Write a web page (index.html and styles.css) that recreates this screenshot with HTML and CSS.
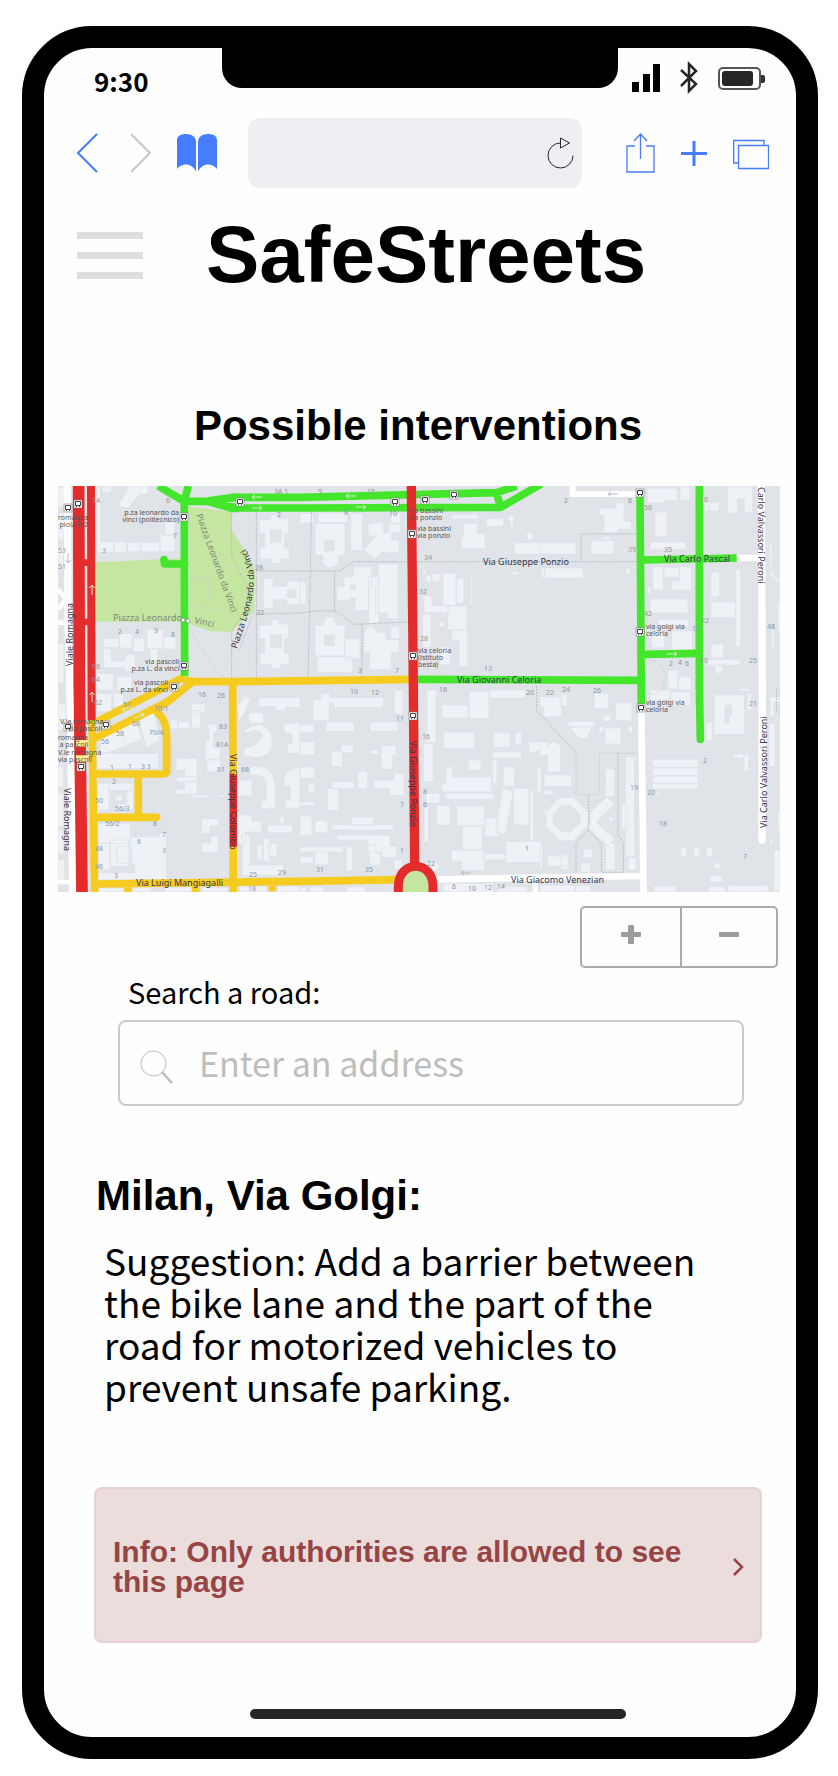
FILE: index.html
```html
<!DOCTYPE html>
<html lang="en">
<head>
<meta charset="utf-8">
<meta name="viewport" content="width=device-width, initial-scale=1">
<title>SafeStreets</title>
<link rel="stylesheet" href="styles.css">
</head>
<body>
<div class="phone">
  <div class="status">
    <span class="time">9:30</span>
    <span class="notch"></span>
    <span class="indicators">
      <svg width="28" height="28" viewBox="0 0 28 28" aria-label="Signal"><path d="M0 18h7v10H0zM11 10h7v18h-7zM21 0h7v28h-7z"/></svg>
      <svg width="18" height="34" viewBox="0 0 18 34" fill="none" stroke="#262626" stroke-width="2.500" aria-label="Bluetooth"><path d="M1 9l15 14-7 7V3l7 7L1 25"/></svg>
      <svg width="47" height="23" viewBox="0 0 47 23" aria-label="Battery"><rect x="1" y="1" width="41" height="21" rx="4" fill="none" stroke="#555" stroke-width="2"/><rect x="4" y="4" width="31" height="15" rx="3" fill="#262626"/><path d="M43 8h2q2 0 2 2v4q0 2-2 2h-2z" fill="#333"/></svg>
    </span>
  </div>

  <nav class="toolbar" aria-label="Browser">
    <button class="icon-btn" aria-label="Back"><svg width="29" height="40" viewBox="0 0 29 40" fill="none" stroke="#467cfe" stroke-width="2"><path d="M20 1L1 20l19 19"/></svg></button>
    <button class="icon-btn" aria-label="Forward"><svg width="20" height="40" viewBox="0 0 20 40" fill="none" stroke="#c7c7cc" stroke-width="2"><path d="M0 1l19 19L0 39"/></svg></button>
    <button class="icon-btn" aria-label="Bookmarks"><svg width="42" height="38" viewBox="0 0 42 38" fill="#467cfe"><path d="M1 35V6C1 2 5 0 10 0c6 0 10 3 10 8v30C17 29 6 28 1 35zM22 38V8c0-5 4-8 10-8 5 0 9 2 9 6v29C36 28 25 29 22 38z"/></svg></button>
    <div class="url">
      <input class="url-input" type="text" aria-label="Page address">
      <button class="icon-btn" aria-label="Reload"><svg width="27" height="32" viewBox="0 0 27 32" fill="none" stroke="#262626"><path d="M13.500 6A12.500 12.500 0 1 0 26 18.500M13.500 1v10l9-5z"/></svg></button>
    </div>
    <div class="actions">
      <button class="icon-btn" aria-label="Share"><svg width="29" height="40" viewBox="0 0 29 40" fill="none" stroke="#467cfe" stroke-width="1.300"><path d="M9 13H1v26h27V13h-8M14.500 26V1M8 8l6.500-7L21 8"/></svg></button>
      <button class="icon-btn" aria-label="New tab"><svg width="26" height="40" viewBox="0 0 26 40" stroke="#467cfe" stroke-width="3"><path d="M13 8v25M0 20.500h26"/></svg></button>
      <button class="icon-btn" aria-label="Tabs"><svg width="36" height="40" viewBox="0 0 36 40" fill="none" stroke="#467cfe" stroke-width="1.300"><path d="M5 30H.7V7.500h30.300V12"/><path d="M5.500 12.500h30v23h-30z"/></svg></button>
    </div>
  </nav>

  <header class="header">
    <button class="menu" aria-label="Menu"><span></span><span></span><span></span></button>
    <h1 class="brand">SafeStreets</h1>
  </header>

  <main>
    <h2 class="page-title">Possible interventions</h2>

    <svg class="map" viewBox="0 0 722 406" role="img" aria-label="Street map">
      <defs>
        <path id="arc-vinci" d="M179 163C187 136 201 104 194 78Q190 62 176 50"/>
        <g id="stop"><rect x="-4" y="-4" width="8" height="8" fill="#fff" stroke="#777" stroke-width=".6"/><path d="M-2.500-2.500h5v4h-5zM-1.500 1.500v1.500M1.500 1.500v1.500" fill="none" stroke="#444"/></g>
        <path id="arrow" d="M-5 0H5M2-2.500L5 0 2 2.500" fill="none"/>
      </defs>
      <rect width="722" height="406" fill="#e0e3e8"/>
      <g transform="scale(.333333)">
        <path class="park" d="M113 229l260-12v190H113zM392 62l129 15v55l40 62 29 55 1 30-3 95-40 35-27 28-62-1-67-22z"/>
        <g class="bld">
          <!-- north-west blocks -->
          <g transform="translate(-24 -18)">
            <path d="M24 20h20v60H24zM24 100h18v80H24zM24 200h17v60H24zM24 490h18v120H24z"/>
            <path d="M140 20h12v165h40v32h-52zM155 20h30v16h-30zM192 185h38v31h-38zM232 187h40v28h-40zM272 187h58v28h-58zM330 165h45v50h-45zM345 125h30v40h-30zM203 78l36-60h55v24h-25l-34 42z"/>
            <path d="M628 120h34v-16h24v12h30v44h-12v44h14v34h-26v12h-28v-12h-34v-34h14v-44h-16zM640 295h30v24h40v-16h40v70h-40v-14h-40v26h-30zM628 436h34v-16h24v12h30v44h-12v44h14v34h-26v12h-28v-12h-34v-34h14v-44h-16z"/>
            <path d="M160 475h48v28h-48zM208 460h38v44h-38zM160 505h24v38h42v-20h30v52h-32v-12h-64zM250 475h34v40h-34zM290 448h50v58h-50zM340 470h38v38h-38zM300 505h24v50h-24zM140 580h50v50h-50zM200 590h45v40h-45z"/>
          </g>
          <!-- university blocks -->
          <g transform="translate(726 -18)">
            <path d="M0 100h40v30H0zM45 130h90v96h-20v24l-16 13H82l-14-13v-24H45zM54 98h88v30H54zM152 100h36v112h-36zM220 128h30v30h16v-26h36v26h-28v22h24v38h-54l-20 20-34-28 40-42h-26v-38h16zM272 100h30v30h-30z"/>
            <path d="M160 260h55v60h-9v72h-42v-32h-54v-40h22v-30h28zM206 290h30v140h-30zM235 252h60v164h-32v-16h-36v-86h8zM0 305h18v68H0z"/>
            <path d="M45 435h24l10-24h22l10 24h24v92h-90zM134 476h46v60h-46zM52 530h106v48H52zM192 455l20-20 22 22h24v22h40v38h-24v52h-66v-52h-16v-30zM272 440h26v36h-26z"/>
            <path d="M455 103h80v14h-80zM558 115h52v24h-52zM624 108h20v12h-4v20h-10v-20h-6zM490 131h42v30h24v45h-72v-35h6zM642 188h110v34H642zM676 168l14-14 14 14-14 14zM722 264h40v30h-40z"/>
            <path d="M368 268h10v14h-10zM378 285h16v22h-16zM396 282h24v22h-24zM428 280h40v96h-40zM470 294h22v76h-22zM372 347h24v29h54v22h-78zM443 378h58v72h-58zM368 402h25v100h-25zM455 450h48v110h-26v-80h-22zM418 425h14v16h-14zM420 500h30v54h-30zM512 285h6v90h-6zM590 282h10v10h-10zM635 275h20v10h-20z"/>
          </g>
          <!-- north-east blocks -->
          <g transform="translate(1446 -18)">
            <path d="M26 64h6v10h-6zM178 84h50v-16h24v55h22v25h-40v10h-42v-52h-14zM152 182h70v40h-70zM0 188h108v34H0zM15 264h115v30H15zM3 264h10v24H3zM252 205h8v14h-8zM266 205h22v14h-22zM258 264h13v18h-13zM185 170h28v8h-28z"/>
            <path d="M322 25h90v36h-36v8h-54zM420 20h30v40h-30zM345 96h36v74h-36zM330 186h108v22H330zM490 66h22v26h-22zM505 66h32v28h-32zM563 20h74v78h-24v-42h-20v44h-30z"/>
            <path d="M338 260h32v70h-32zM372 262h46v30h-46zM418 260h36v70h-60v-28h24zM322 320h10v20h-10zM330 357h114v42H330zM354 418h92v22h-92zM334 455h40v48h-40zM395 452h62v58h-62zM512 276h27v74h-27zM512 365h74v48h-74zM587 266h15v236h-15zM512 492h38v42h-38zM500 538h100v18h-100zM525 556h22v24h-22zM384 570h30v58h-30zM415 590h38v40h-38zM595 625h35v8h-35zM688 190h8v90l25 20v12l-30-25zM694 448h8v62h-8zM713 365h8v90h-8z"/>
          </g>
          <!-- south-west blocks -->
          <g transform="translate(-24 612)">
            <path d="M24 40h24v80H24zM24 230h16v60H24zM24 310h18v100H24zM24 420h18v70H24zM24 510h20v70H24z"/>
            <path d="M140 10h45v55h-45zM190 10h30v40h-30zM150 150l60-35 28 50-88 30zM200 110l55-25 22 62-48 22zM262 80l50-18 18 90-40 20zM140 190h186v46H140zM142 280h36v80h-36zM178 280h72v22h-72zM230 302h20v58h-50v-18h30zM196 316h22v16h-22z"/>
            <path d="M145 400h96v60h-96zM180 450h56v80h-56zM145 460h34v80h-34zM200 470h44v50h-44zM262 400h88v28h-90v14h-20v80h14v26H142v22h208V400zM258 430h70v10h-70z"/>
            <path d="M378 205h64v70h-64v-15h26v-20h-26zM378 260h64v52h-64v-14h26v-20h-26zM420 315h52v8h-52zM503 315h20v8h-20zM362 90h22v26h-22zM384 95h36v20h-36zM424 62h28v52h-28zM424 42h42v28h-42zM474 102h26v26h-10v42h20v40h-44v-60h12zM470 208h42v38h-42zM454 386h52v22h-26v30h24v50h-50v-30h28v-28h-28zM348 318h6v12h-6zM518 544h8v14h-8z"/>
            <path d="M562 50l22-32 18 6-16 42-20 30zM596 68h44v32h-44zM626 22h124v30H706v10h-30v-12h-50zM584 120q60-40 82 20v30q-20 50-84 24v-20q44-4 54-38-10-28-52-4zM702 100h48v90h-38v-30h14v-30h-24zM562 270h44v48h-44zM600 230q70-10 76 56v70h-42v-24h14v-60q-10-20-48-16zM702 260q10-24 48-28v122h-44v-24h14v-42h-18zM560 374h46v20h28v32h-48v38h-30zM652 404h76v24h-76zM576 434h24v90h100v32H576zM620 465h16v44h-16zM640 445h20v70h-20zM655 460h26v40h-26zM688 378h16v22h-16zM570 588h80v18h-80zM682 588h68v18h-68zM145 594h80v12h-80zM248 592h56v14h-56zM345 592h80v14h-80zM456 592h78v14h-78z"/>
          </g>
          <!-- south-centre blocks -->
          <g transform="translate(726 612)">
            <path d="M38 28h24v-18h28v12h160v30H102v-12H88v52H38zM283 0h26v72h-26zM78 96h84v28H78zM210 96h84v28h-84zM0 104h42v24H0zM0 155h44v40H0zM94 184h30v-20h36v24h-32v42H94zM210 180h26v12h-26zM244 166h44v30h-10v42h-34zM173 244h30v52h-30zM96 274h66v22H96zM222 270h60v-20h30v66h-44v-20h-46zM82 294h34v68H82zM0 230h44v34H0zM24 280h20v30H24zM0 335h46v12H0zM155 380h65v26h-65zM0 378h36v58H0zM95 404h185v16H95zM44 400q22-20 40 0v28h-40zM110 435h160v34h20v34h-46v-16h-40v-36h-94zM0 470h130v16H0zM45 490q20-44 40 0v34H45zM138 470h20v72h-20zM0 500h40v20H0zM198 464h30v24h14v38h-34v-36zM282 510h24v26h-24z"/>
            <path d="M380 0h28v158h-28zM370 160h30v114h-30zM425 44h80v40h-80zM507 5h60v80h-60zM566 0h110v24H566zM430 126h94v50h-94zM580 128h50v44h-50zM645 127h20v38h-20zM505 210h38v30h-38zM577 185h88v20h-88zM438 230h20v30h116v45H426v-26h12zM577 210h14v72h-14zM610 230h34v58h-34zM436 310h146v18H436zM378 310h42v30h-42zM372 350h14v105h-14zM410 346h40v60h-40zM470 348h84v60h-84zM487 408h60v72h-60zM554 384h40v56h-40zM608 295l32 8-24 130-30-6zM640 295h46v110h-46zM690 300h10v154h-10zM617 454h108v64H617zM454 480h100v62h-70v-28h-30zM548 490h68v20h-68zM380 520q24-22 40 10l-18 20-22-14zM686 155h54v20l-54 16zM710 235h14v70h-14zM735 350q-14 20 15 50z"/>
            <path d="M30 590h40v16H30zM140 590h56v16h-56zM430 580h150v26H430zM592 590h90v16h-90zM0 592h20v14H0z"/>
          </g>
          <!-- south-east blocks -->
          <g transform="translate(1446 612)">
            <path d="M0 20h65v60H10V50H0zM60 12h22v36H60zM162 10h44v46h-44zM226 38h50v54h-50zM195 114h48v48h-48zM84 94h80v16H84zM90 110h66l-16 36q-30 6-50-36zM176 110h16v16h-16zM190 75h22v18h-22zM265 108h12v18h-12zM24 170q18-30 38 0v76H22v-50H0v-40h24zM12 254h82v36H12zM12 300h26v14H12zM256 200h28v300h-28zM196 236h28v84h-28zM245 342h20v78h-20zM264 504h24v36h-24zM197 460h28v80h-28zM207 380h12v14h-12z"/>
            <path fill-rule="evenodd" d="M60 322h40l50 50v30l-50 50H60l-42-42v-46zM66 346l-26 26v30l28 24h24l28-26v-26l-28-28zM145 372l55-50 25 20-52 50v10l52 44-20 22-60-52z"/>
            <path d="M130 476h28v28h-28zM122 518h30v28h-30zM22 498h64v30H22zM62 492h24v46H62zM0 456h8v80H0zM330 0h60v30h-60zM392 5h60v42h-60zM498 96h20v56h-20zM612 192h14v52h-14zM578 192h34v12h-34zM338 208h136v24H338zM338 233h136v24H338zM338 258h136v22H338zM338 281h136v16H338zM342 307h18v8h-18zM422 472h18v28h-18zM461 472h18v28h-18zM499 472h18v28h-18zM522 518h18v18h-18zM510 556h36v20h-36zM506 590h50v16h-50zM564 586h120v20H564zM340 588h70v18h-70zM687 100h18v130h-18zM690 20h28v16h-16v44h-12zM702 480h18v124h-18zM712 363h8v60h-8zM688 450h10v12h-10zM622 10h12v50h-12zM475 254h8v8h-8zM0 586h106v20H0zM106 586h46v20h-46z"/>
            <path fill-rule="evenodd" d="M522 14h92v120h-92zM555 46v28h20V46zM555 76v24h12V76z"/>
          </g>
        </g>
        <g fill="#e0e3e8"><path d="M798 162h32v34h-32zM798 446h32v34h-32zM876 295h18v18h-18zM876 335h18v14h-18zM636 130h36v40h-36zM636 445h36v40h-36zM686 310h30v26h-30z"/></g>
        <g class="paths">
          <path d="M521 80v52l0 80 62 124-62 100v150M595 80v516M595 255h250l40-28h865M585 384l141-3q70-10 110-4l52 38 160-7M760 80l0 16-10 500M830 260v120M912 415v180M580 394l-36 100M1750 144h-181v78M2156 610v64l130 130"/>
          <path d="M1592 927v106l-38 38v112M1592 1033l38 40v86h66v-90l-16-20V800M1436 600v75l120 125" />
        </g>
        <g class="trails"><path d="M392 300l120-65 60 20M392 270l60 10v60l-26 60M392 355l140 30M460 155l60-40M392 425l90 140 40 20M1554 800v126h70V802h112M342 768v100M1775 520q60 20 45 70t-55 30"/></g>

        <g class="road white">
          <path d="M28 0l2 400 8 300 6 518" stroke-width="22"/><path d="M0 310l24 30-24 30M0 410h50M0 1188h40" stroke-width="14"/>
          <path d="M1544 0v24h190" stroke-width="18"/>
          <path d="M1750 660l7 558M1138 1180l620-10M2036 216h66" stroke-width="20"/>
          <path d="M2110 0l3 600-1 462" stroke-width="22" stroke-linecap="round"/>
          <path d="M1432 1190v28" stroke-width="16"/>
        </g>
        <g class="road yellow">
          <path d="M118 706l182-92 80-42M108 758l220-110 72-58M376 582l36 5h100l566-7" />
          <path d="M297 678q28 24 29 70v110q-2 6-14 6H110M241 864v128M108 994h188" stroke-linecap="round"/>
          <path d="M102 690l4 280 4 248M524 585l2 633M110 1194l616-8 300-5M209 1194v24M413 1190v28M643 1188v28"/>
        </g>
        <g class="road green">
          <path d="M391 0l-12 44v180l1 346M301 0l74 44M375 46h90M521 34h205l590-14 60-20M521 66h205l602-2 122-70M1316 22l12 42"/>
          <path d="M318 221l2 13h60" stroke-linecap="round" stroke-linejoin="round"/>
          <path d="M1074 580l672 3M1746 32l2 300 2 322M1758 222l278-6M1758 505l165-3"/>
          <path d="M1924 0v600l3 160" stroke-linecap="round"/>
        </g>
        <path d="M446 34l75-11h20v56h-20l-75-22z" fill="#44e62c"/><path d="M500 49l45-3v8z" fill="#e0e3e8"/>
        <g class="road red">
          <path d="M62 0l2 600 8 618" stroke-width="35"/><path d="M99 0l2 702" stroke-width="24"/><path d="M76 230h20M76 408h20" stroke-width="20"/>
          <path d="M1060 0l6 600 4 540" stroke-width="28"/><path d="M526 866v216" stroke-width="22"/>
        </g>
        <path d="M1021 1250v-48c0-82 104-82 104 0v48z" fill="#c5e6a0" stroke="#e42c2c" stroke-width="27"/>
        <path d="M54 762h34v20H54zM54 808h34v20H54z" fill="#fbf08d"/>
      </g>

      <g stroke="#d2efcb" stroke-width="1">
        <use href="#arrow" transform="translate(199 11) rotate(180)"/><use href="#arrow" x="199" y="22"/><use href="#arrow" transform="translate(293 10) rotate(180)"/><use href="#arrow" x="303" y="21"/><use href="#arrow" x="614" y="168"/>
        <use href="#arrow" transform="translate(34 104) rotate(-90)"/><use href="#arrow" transform="translate(34 211) rotate(-90)"/><use href="#arrow" transform="translate(69 222) rotate(153)"/><use href="#arrow" transform="translate(81 230) rotate(-27)"/>
      </g>
      <g stroke="#b5b9bd"><use href="#arrow" transform="translate(555 8) rotate(180)"/><use href="#arrow" transform="translate(408 387) rotate(180)"/><use href="#arrow" transform="translate(10 72) rotate(90)"/></g>

      <g><use href="#stop" x="20" y="18"/><use href="#stop" x="10" y="22"/><use href="#stop" x="126" y="31"/><use href="#stop" x="182" y="16"/><use href="#stop" x="126" y="180"/><use href="#stop" x="116" y="201"/><use href="#stop" x="337" y="16"/><use href="#stop" x="367" y="14"/><use href="#stop" x="396" y="9"/><use href="#stop" x="354" y="48"/><use href="#stop" x="355" y="170"/><use href="#stop" x="355" y="230"/><use href="#stop" x="582" y="7"/><use href="#stop" x="582" y="146"/><use href="#stop" x="583" y="222"/><use href="#stop" x="48" y="239"/><use href="#stop" x="10" y="241"/><use href="#stop" x="23" y="281"/></g>
      <g fill="#fff" stroke="#666" stroke-width=".5"><circle cx="125" cy="134" r="2"/><circle cx="130" cy="135" r="2"/></g>

      <g class="num">
        <text x="34" y="17">74</text><text x="108" y="17">6</text><text x="115" y="52">7</text><text x="44" y="67">3</text><text x="60" y="148">2</text><text x="77" y="148">4</text><text x="96" y="147">9</text><text x="113" y="151">8</text><text x="216" y="8">3A 1</text><text x="219" y="31">2</text><text x="197" y="84">28</text><text x="198" y="129">32</text><text x="34" y="183">66</text><text x="34" y="196">64</text><text x="0" y="67">53</text><text x="0" y="83">51</text>
        <text x="260" y="8">9</text><text x="309" y="8">15</text><text x="286" y="29">8</text><text x="331" y="30">10</text><text x="366" y="74">34</text><text x="361" y="108">32</text><text x="362" y="155">28</text><text x="300" y="187">3</text><text x="337" y="187">7</text><text x="426" y="185">13</text>
        <text x="506" y="17">2</text><text x="570" y="17">6</text><text x="586" y="24">56</text><text x="642" y="16">16</text><text x="570" y="66">39</text><text x="606" y="66">35</text><text x="586" y="130">42</text><text x="634" y="145">19</text><text x="643" y="137">22</text><text x="642" y="177">20</text><text x="691" y="177">25</text><text x="709" y="143">48</text><text x="611" y="180">2</text><text x="620" y="179">4</text><text x="627" y="180">6</text>
        <text x="36" y="219">62</text><text x="65" y="221">57</text><text x="74" y="240">60</text><text x="58" y="250">58</text><text x="43" y="258">56</text><text x="91" y="249">70/4</text><text x="96" y="225">70/1</text><text x="140" y="211">16</text><text x="159" y="212">26</text><text x="161" y="243">83</text><text x="158" y="261">81A</text><text x="159" y="286">81</text><text x="183" y="286">68</text><text x="52" y="284">1</text><text x="70" y="283">1</text><text x="83" y="283">3 3</text><text x="54" y="298">2</text><text x="57" y="325">56/3</text><text x="47" y="340">56/2</text><text x="95" y="340">8</text><text x="79" y="358">6</text><text x="104" y="351">7</text><text x="104" y="367">3</text><text x="37" y="317">50</text><text x="37" y="365">48</text><text x="37" y="383">46</text><text x="56" y="392">3</text><text x="191" y="391">25</text><text x="220" y="389">29</text><text x="190" y="405">18</text>
        <text x="292" y="208">10</text><text x="313" y="209">12</text><text x="338" y="235">11</text><text x="364" y="253">16</text><text x="365" y="308">8</text><text x="365" y="321">6</text><text x="342" y="321">7</text><text x="342" y="367">1</text><text x="369" y="380">22</text><text x="258" y="386">31</text><text x="307" y="386">35</text><text x="394" y="403">6</text><text x="410" y="405">10</text><text x="426" y="404">12</text><text x="439" y="403">14</text><text x="467" y="365">1</text><text x="468" y="209">20</text><text x="381" y="206">18</text>
        <text x="488" y="209">22</text><text x="504" y="206">24</text><text x="535" y="207">26</text><text x="572" y="304">19</text><text x="589" y="309">20</text><text x="601" y="340">18</text><text x="645" y="277">2</text><text x="685" y="373">7</text><text x="691" y="220">21</text>
      </g>
      <g class="poi">
        <text x="30" y="34" text-anchor="end">romagna</text><text x="30" y="41" text-anchor="end">piola m2</text>
        <text x="121" y="29" text-anchor="end">p.za leonardo da</text><text x="121" y="36" text-anchor="end">vinci (politecnico)</text>
        <text x="121" y="178" text-anchor="end">via pascoli</text><text x="121" y="185" text-anchor="end">p.za L. da vinci</text>
        <text x="110" y="199" text-anchor="end">via pascoli</text><text x="110" y="206" text-anchor="end">p.za L. da vinci</text>
        <text x="2" y="238">V.le romagna</text><text x="44" y="245" text-anchor="end">via pascoli</text>
        <text x="30" y="254" text-anchor="end">romagna</text><text x="30" y="261" text-anchor="end">a pascoli</text>
        <text x="0" y="269">V.le romagna</text><text x="0" y="276">via pascoli</text>
        <text x="351" y="27">via bassini</text><text x="351" y="34">via ponzio</text><text x="359" y="45">via bassini</text><text x="359" y="52">via ponzio</text>
        <text x="360" y="167">via celoria</text><text x="360" y="174">(istituto</text><text x="360" y="181">besta)</text>
        <text x="588" y="143">via golgi via</text><text x="588" y="150">celoria</text><text x="588" y="219">via golgi via</text><text x="588" y="226">celoria</text>
      </g>
      <g class="street">
        <text x="425" y="79">Via Giuseppe Ponzio</text><text x="606" y="76">Via Carlo Pascal</text><text x="399" y="197">Via Giovanni Celoria</text>
        <text x="78" y="400">Via Luigi Mangiagalli</text><text x="453" y="397">Via Giacomo Venezian</text>
        <text transform="translate(15 180) rotate(-90)">Viale Romagna</text><text transform="translate(6 302) rotate(90)">Viale Romagna</text>
        <text transform="translate(700 1) rotate(90)">Carlo Valvassori Peroni</text><text transform="translate(709 342) rotate(-90)">Via Carlo Valvassori Peroni</text>
        <text transform="translate(172 268) rotate(90)">Via Giuseppe Colombo</text><text transform="translate(352 255) rotate(90)">Via Giuseppe Ponzio</text>
        <text><textPath href="#arc-vinci">Piazza Leonardo da Vinci</textPath></text>
      </g>
      <g class="street faint"><text x="55" y="135">Piazza Leonardo</text><text transform="translate(136 137) rotate(12)">Vinci</text><text transform="translate(138 29) rotate(70)">Piazza Leonardo da Vinci</text></g>
    </svg>

    <div class="zoom">
      <button class="zoom-btn" aria-label="Zoom in"><svg width="20" height="20" viewBox="0 0 20 20"><path d="M8 0h4q1 0 1 1v6h6q1 0 1 1v3q0 1-1 1h-6v6q0 1-1 1H8q-1 0-1-1v-6H1q-1 0-1-1V8q0-1 1-1h6V1q0-1 1-1z"/></svg></button>
      <button class="zoom-btn" aria-label="Zoom out"><svg width="20" height="20" viewBox="0 0 20 20"><rect y="7" width="20" height="5" rx="1"/></svg></button>
    </div>

    <form class="search">
      <label class="search-label" for="road">Search a road:</label>
      <div class="search-box">
        <svg width="33" height="34" viewBox="0 0 33 34" fill="none" stroke="#bdbdbd"><circle cx="13.500" cy="13.500" r="12.500"/><path d="M22 22l10 11" stroke-width="2.500"/></svg>
        <input class="search-input" id="road" type="text" placeholder="Enter an address">
      </div>
    </form>

    <h2 class="place">Milan, Via Golgi:</h2>
    <p class="suggestion">Suggestion: Add a barrier between the bike lane and the part of the road for motorized vehicles to prevent unsafe parking.</p>

    <button class="info">
      <span>Info: Only authorities are allowed to see this page</span>
      <svg width="11" height="18" viewBox="0 0 11 18" fill="none" stroke="#974544" stroke-width="2.500"><path d="M1 1l8 8-8 8"/></svg>
    </button>
  </main>
  <div class="home-bar"></div>
</div>
</body>
</html>
```
FILE: styles.css
```css
* { box-sizing: border-box; }

body {
  margin: 0;
  padding: 26px 20px 18px 22px;
  background: #fff;
  color: #000;
  font-family: "Noto Sans CJK SC", "Noto Sans", sans-serif;
}

button {
  margin: 0;
  padding: 0;
  border: 0;
  background: none;
  color: inherit;
  font: inherit;
}

input {
  min-width: 0;
  border: 0;
  background: none;
  font: inherit;
  outline: 0;
}

svg { display: block; flex: none; }
h1, h2, p { margin: 0; }

h1, h2, .info {
  font-family: "Liberation Sans", Arial, sans-serif;
  font-weight: bold;
}

.phone {
  border: 22px solid #000;
  border-radius: 70px;
  padding-bottom: 18px;
  background: #fefefe;
}

.status {
  display: grid;
  grid-template-columns: 1fr 396px 1fr;
  align-items: start;
  height: 70px;
}

.time {
  padding: 13px 0 0 50px;
  font-size: 26px;
  line-height: 40px;
  font-weight: bold;
}

.notch {
  height: 40px;
  border-radius: 0 0 20px 20px;
  background: #000;
}

.indicators {
  display: flex;
  align-items: center;
  justify-content: flex-end;
  gap: 20px;
  padding: 13px 31px 0 0;
}

.toolbar {
  display: flex;
  align-items: center;
  gap: 25px;
  padding: 0 27px 0 33px;
}

.url {
  display: flex;
  flex: 1;
  align-items: center;
  min-width: 0;
  height: 70px;
  margin: 0 19px 0 5px;
  padding: 0 8px 0 16px;
  border-radius: 12px;
  background: #eeeef3;
}

.url-input { flex: 1; font-size: 26px; }
.actions { display: flex; gap: 26px; }

.header {
  display: flex;
  align-items: center;
  gap: 63px;
  padding: 21px 33px 0;
}

.menu {
  display: grid;
  gap: 13px;
  width: 66px;
}

.menu span { height: 7px; background: #dedede; }
.brand { font-size: 80px; line-height: 92px; }

.page-title {
  margin: 101px 4px 37px 0;
  font-size: 42px;
  line-height: 47px;
  text-align: center;
}

.map {
  width: calc(100% - 30px);
  margin: 0 16px 0 14px;
}

.park { fill: #c5e6a0; }
.bld { fill: #eef2f6; stroke: #dde1e5; stroke-width: 2; }
.paths { fill: none; stroke: #b4b7bc; stroke-width: 3; stroke-dasharray: 5 4; }
.trails { fill: none; stroke: #cdd3c8; stroke-width: 2; }
.road { fill: none; stroke-width: 23; }
.white { stroke: #fff; }
.yellow { stroke: #f6cb20; }
.green { stroke: #44e62c; }
.red { stroke: #e42c2c; }

.map text { font-family: "Noto Sans", sans-serif; }
.num { font-size: 7px; fill: #8a979e; }
.poi { font-size: 7px; fill: #555; }
.street { font-size: 9px; fill: #35354a; }
.faint { fill: #7d8a78; }

.zoom {
  display: grid;
  grid-template-columns: 98px 96px;
  width: max-content;
  height: 62px;
  margin: 14px 18px 0 auto;
  border: 2px solid #ababab;
  border-radius: 5px;
}

.zoom-btn {
  display: flex;
  align-items: center;
  justify-content: center;
  padding-bottom: 4px;
  fill: #9c9c9c;
}

.zoom-btn + .zoom-btn { border-left: 2px solid #ababab; }

.search { margin: 5px 52px 0 74px; }

.search-label {
  display: block;
  padding: 0 10px;
  font-size: 29px;
  line-height: 36px;
}

.search-box {
  display: flex;
  align-items: center;
  gap: 26px;
  height: 86px;
  margin-top: 11px;
  padding: 0 20px;
  border: 2px solid #cbcbcb;
  border-radius: 8px;
}

.search-box svg { margin-top: 8px; }
.search-input { flex: 1; padding: 0; font-size: 34px; line-height: 50px; }
.search-input::placeholder { color: #bdbdbd; opacity: 1; }

.place {
  margin: 66px 52px 0;
  font-size: 42px;
  line-height: 47px;
}

.suggestion {
  margin: 20px 80px 0 60px;
  font-size: 37px;
  line-height: 42px;
}

.info {
  display: flex;
  align-items: center;
  justify-content: space-between;
  gap: 40px;
  width: calc(100% - 84px);
  min-height: 156px;
  margin: 80px 34px 0 50px;
  padding: 4px 16px 0 17px;
  border: 2px solid #e6d2d5;
  border-radius: 8px;
  background: #ebdddc;
  color: #974544;
  font-size: 30px;
  line-height: 30px;
  text-align: left;
}

.home-bar {
  height: 10px;
  margin: 66px 170px 0 206px;
  border-radius: 5px;
  background: #262626;
}
```
